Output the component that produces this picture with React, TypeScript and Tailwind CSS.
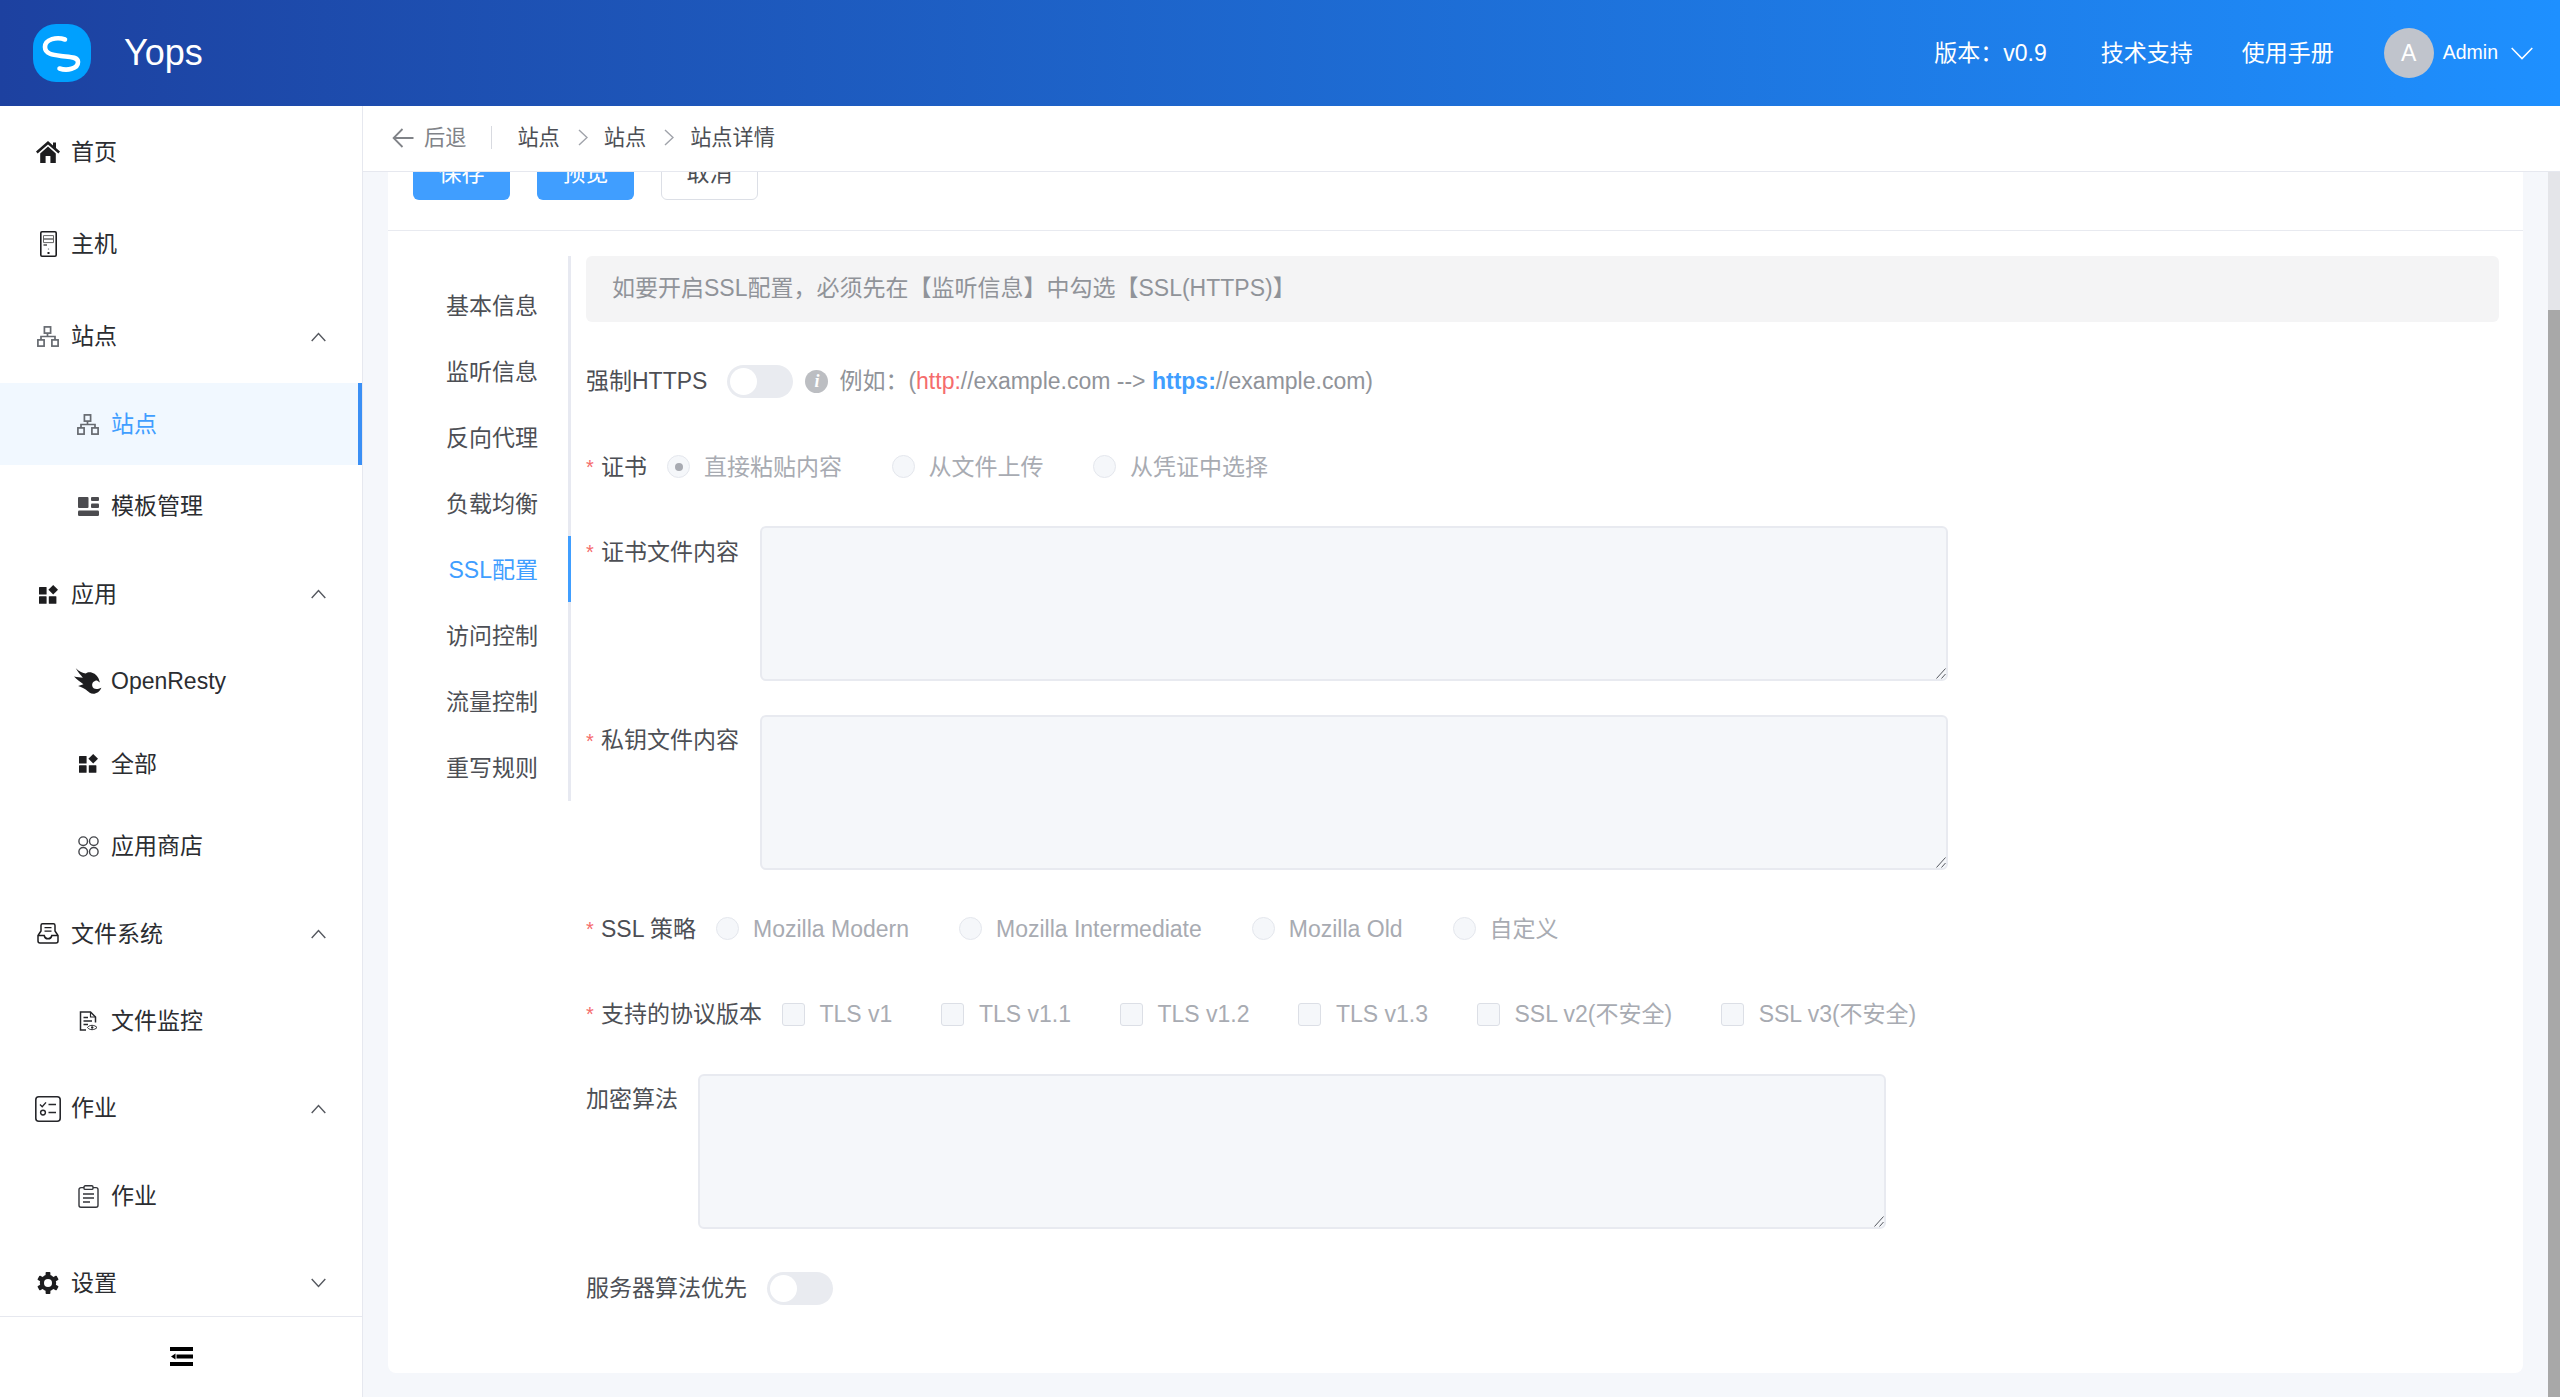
import React from "react";

const FONT = "font-['Liberation_Sans','Noto_Sans_CJK_SC',sans-serif]";

const Chevron = ({ up = true }: { up?: boolean }) => (
  <svg width="15" height="10" viewBox="0 0 15 10" fill="none" stroke="#55585f" strokeWidth="1.4">
    <path d={up ? "M0.7 9L7.5 1.6L14.3 9" : "M0.7 1L7.5 8.4L14.3 1"} />
  </svg>
);

const HomeIcon = () => (
  <svg width="24" height="22" viewBox="0 0 24 22" fill="#1d1d1f">
    <path d="M12 0L0 10.6L1.6 12.6L12 3.4L22.4 12.6L24 10.6L20 7V1.4H17V4.4Z" />
    <path d="M4.2 12.6L12 5.6L19.8 12.6V22H14.4V15H9.6V22H4.2Z" />
  </svg>
);
const ServerIcon = () => (
  <svg width="17" height="26" viewBox="0 0 17 26" fill="none" stroke="#1d1d1f">
    <rect x="0.8" y="0.8" width="15.4" height="24.4" rx="1.2" strokeWidth="1.6" />
    <path d="M3.5 4.6H13.5V8H3.5ZM3.5 8H13.5V11.6H3.5Z" strokeWidth="1" stroke="#666" />
    <path d="M3.5 14H7" strokeWidth="1.6" stroke="#555" />
    <path d="M8.5 17.5V18.6" strokeWidth="1.2" stroke="#777" />
    <path d="M8.5 21V23" strokeWidth="2" />
  </svg>
);
const SiteIcon = () => (
  <svg width="22" height="21" viewBox="0 0 22 21" fill="none" stroke="#666a70" strokeWidth="1.7">
    <rect x="7.4" y="0.9" width="6.2" height="6.2" />
    <rect x="0.9" y="13.9" width="6.2" height="6.2" />
    <rect x="14.9" y="13.9" width="6.2" height="6.2" />
    <path d="M10.5 7V10.5M4 14V10.5H18V14" />
  </svg>
);
const TemplateIcon = () => (
  <svg width="21" height="19" viewBox="0 0 21 19" fill="#4b4b4f">
    <rect x="0" y="0" width="10.5" height="11" rx="1" />
    <rect x="13" y="0" width="8" height="4" rx="1" />
    <rect x="13" y="6.5" width="8" height="4.5" rx="1" />
    <rect x="0" y="13.5" width="21" height="5.5" rx="1.2" />
  </svg>
);
const AppIcon = () => (
  <svg width="19" height="19" viewBox="0 0 19 19" fill="#1d1d1f">
    <rect x="0" y="2" width="7.6" height="7.6" rx="0.6" />
    <rect x="0" y="11.2" width="7.6" height="7.6" rx="0.6" />
    <rect x="9.8" y="11.2" width="7.6" height="7.6" rx="0.6" />
    <path d="M14.2 0L19 4.8L14.2 9.6L9.4 4.8Z" />
  </svg>
);
const BirdIcon = () => (
  <svg width="30" height="29" viewBox="20 24 95 90" fill="#1d1d1f">
    <path d="M26 24C38 36 50 40 60 42C70 32 94 38 103 58L108 72L98 66C88 66 80 74 82 84C84 94 96 98 113 90C106 108 86 116 72 106C62 98 54 90 34 84L52 78C42 70 30 64 20 52C32 54 42 56 50 56C42 46 34 38 26 24Z" />
  </svg>
);
const StoreIcon = () => (
  <svg width="21" height="21" viewBox="0 0 21 21" fill="none" stroke="#44464b" strokeWidth="1.4">
    <circle cx="5.2" cy="5.2" r="4.3" />
    <circle cx="15.8" cy="5.2" r="4.3" />
    <circle cx="5.2" cy="15.8" r="4.3" />
    <circle cx="15.8" cy="15.8" r="4.3" />
  </svg>
);
const InboxIcon = () => (
  <svg width="22" height="21" viewBox="0 0 22 21" fill="none" stroke="#1d1d1f" strokeWidth="1.5">
    <path d="M1 12.5L4 8V2.4A1.6 1.6 0 0 1 5.6 0.8H16.4A1.6 1.6 0 0 1 18 2.4V8L21 12.5V18A2 2 0 0 1 19 20H3A2 2 0 0 1 1 18Z" />
    <path d="M1 12.5H7.2C7.6 14.6 9 15.8 11 15.8C13 15.8 14.4 14.6 14.8 12.5H21" />
    <path d="M7.5 4.6H14.5M7.5 8.2H14.5" strokeWidth="1.3" />
  </svg>
);
const FileEyeIcon = () => (
  <svg width="19" height="20" viewBox="0 0 19 20" fill="none" stroke="#26272b" strokeWidth="1.5">
    <path d="M7 19H1.5V1H11.5L16.5 6V11.5" />
    <path d="M11.5 1V6H16.5" strokeWidth="1.2" />
    <path d="M4.5 6.5H9M4.5 10H13M4.5 13.5H9" strokeWidth="1.3" />
    <path d="M8.5 16.5C10.5 13.6 15.5 13.6 18 16.5C15.5 19.4 10.5 19.4 8.5 16.5Z" strokeWidth="1" />
    <circle cx="13.2" cy="16.5" r="1.2" fill="#26272b" stroke="none" />
  </svg>
);
const JobIcon = () => (
  <svg width="26" height="26" viewBox="0 0 26 26" fill="none" stroke="#26272b" strokeWidth="1.6">
    <rect x="0.8" y="0.8" width="24.4" height="24.4" rx="3" />
    <path d="M5 8.6L7.2 10.8L11 6.4" strokeWidth="1.4" />
    <path d="M13.5 8.6H21M13.5 16.5H21" strokeWidth="1.5" />
    <circle cx="8" cy="16.6" r="2.4" strokeWidth="1.4" />
  </svg>
);
const ClipIcon = () => (
  <svg width="21" height="23" viewBox="0 0 21 23" fill="none" stroke="#33353a" strokeWidth="1.4">
    <path d="M6 2.6H3A2 2 0 0 0 1 4.6V20.3A2 2 0 0 0 3 22.3H18A2 2 0 0 0 20 20.3V4.6A2 2 0 0 0 18 2.6H15" />
    <rect x="6" y="0.8" width="9" height="3.6" rx="1.2" />
    <path d="M5 9H16M5 13H16M5 17H12" strokeWidth="1.3" />
  </svg>
);
const GearIcon = () => (
  <svg width="22" height="22" viewBox="0 0 22 22">
    <g fill="#1d1d1f">
      <circle cx="11" cy="11" r="8.2" />
      <rect x="8.6" y="0" width="4.8" height="22" rx="0.8" />
      <rect x="8.6" y="0" width="4.8" height="22" rx="0.8" transform="rotate(60 11 11)" />
      <rect x="8.6" y="0" width="4.8" height="22" rx="0.8" transform="rotate(120 11 11)" />
    </g>
    <circle cx="11" cy="11" r="4" fill="#fff" />
  </svg>
);
const CollapseIcon = () => (
  <svg width="23" height="19" viewBox="0 0 23 19" fill="#000">
    <rect x="0" y="0" width="23" height="4" />
    <rect x="6.5" y="7.5" width="16.5" height="4" />
    <rect x="0" y="15" width="23" height="4" />
    <path d="M1 9.5L5.5 6.5V12.5Z" />
  </svg>
);

type Item = { label: string; icon: React.ReactNode; sub?: boolean; chevron?: "up" | "down"; active?: boolean };

const items: Item[] = [
  { label: "首页", icon: <HomeIcon /> },
  { label: "主机", icon: <ServerIcon /> },
  { label: "站点", icon: <SiteIcon />, chevron: "up" },
  { label: "站点", icon: <SiteIcon />, sub: true, active: true },
  { label: "模板管理", icon: <TemplateIcon />, sub: true },
  { label: "应用", icon: <AppIcon />, chevron: "up" },
  { label: "OpenResty", icon: <BirdIcon />, sub: true },
  { label: "全部", icon: <AppIcon />, sub: true },
  { label: "应用商店", icon: <StoreIcon />, sub: true },
  { label: "文件系统", icon: <InboxIcon />, chevron: "up" },
  { label: "文件监控", icon: <FileEyeIcon />, sub: true },
  { label: "作业", icon: <JobIcon />, chevron: "up" },
  { label: "作业", icon: <ClipIcon />, sub: true },
  { label: "设置", icon: <GearIcon />, chevron: "down" },
];

const NavItem = ({ item }: { item: Item }) => (
  <div
    className={`flex shrink-0 items-center ${item.sub ? "h-[82.5px] pl-[74px]" : "h-[92.3px] pl-[34px]"} ${
      item.active ? "border-r-4 border-[#3a8ff5] bg-[#f1f8ff] text-[#409eff]" : "text-[#2b2d31]"
    }`}
  >
    <span className="mr-[9px] flex w-[28px] items-center justify-center">{item.icon}</span>
    <span className="text-[23px]">{item.label}</span>
    {item.chevron && (
      <span className="ml-auto mr-[36px] flex">
        <Chevron up={item.chevron === "up"} />
      </span>
    )}
  </div>
);

const Sidebar = () => (
  <aside className="flex w-[363px] shrink-0 flex-col border-r border-[#e6e8ef] bg-white">
    <nav className="flex min-h-0 flex-1 flex-col overflow-hidden">
      {items.map((item, i) => (
        <NavItem key={i} item={item} />
      ))}
    </nav>
    <div className="flex h-[81px] shrink-0 items-center justify-center border-t border-[#e6e8ef] pb-[2px]">
      <CollapseIcon />
    </div>
  </aside>
);

const Header = () => (
  <header className="flex h-[106px] shrink-0 items-center bg-[linear-gradient(90deg,#1d41a0,#1e90ff)] pl-[33px] pr-[27px] text-white">
    <svg width="58" height="58" viewBox="0 0 58 58" fill="none">
      <rect width="58" height="58" rx="23" fill="#00a0fe" />
      <path
        d="M32 15.5C24 12.5 12 15 12 23C12 30 20 31 28 32C36 33 45 32.5 45 38C45 45 34 47 26.5 44.5"
        stroke="#fff"
        strokeWidth="4.6"
        strokeLinecap="round"
      />
    </svg>
    <span className="ml-[33px] text-[36px]">Yops</span>
    <div className="ml-auto flex items-center text-[23px]">
      <span>版本：v0.9</span>
      <span className="ml-[54px]">技术支持</span>
      <span className="ml-[49px]">使用手册</span>
      <span className="ml-[50px] flex h-[50px] w-[50px] items-center justify-center rounded-full bg-[#c0c4cc]">A</span>
      <span className="ml-[9px] text-[19.5px]">Admin</span>
      <svg className="ml-[13px]" width="22" height="13" viewBox="0 0 22 13" fill="none" stroke="#fff" strokeWidth="1.5">
        <path d="M0.7 1L11 11.6L21.3 1" />
      </svg>
    </div>
  </header>
);

const SmallChevron = () => (
  <svg width="10" height="17" viewBox="0 0 10 17" fill="none" stroke="#a0a3aa" strokeWidth="1.4">
    <path d="M1 1L9 8.5L1 16" />
  </svg>
);

const Breadcrumb = () => (
  <div className="flex h-[66px] shrink-0 items-center border-b border-[#e6e8ef] bg-white pb-[2px] pl-[29px] text-[21.2px] text-[#4d4f55]">
    <svg width="22" height="20" viewBox="0 0 22 20" fill="none" stroke="#808388" strokeWidth="1.8">
      <path d="M21.5 10H2M10.5 1L1.6 10L10.5 19" />
    </svg>
    <span className="ml-[10px] text-[#808388]">后退</span>
    <span className="mx-[25px] h-[23px] w-px bg-[#d8dae0]" />
    <span>站点</span>
    <span className="ml-[18px] mr-[16px] flex">
      <SmallChevron />
    </span>
    <span>站点</span>
    <span className="ml-[18px] mr-[16px] flex">
      <SmallChevron />
    </span>
    <span>站点详情</span>
  </div>
);

const tabs = ["基本信息", "监听信息", "反向代理", "负载均衡", "SSL配置", "访问控制", "流量控制", "重写规则"];

const Tabs = () => (
  <div className="flex h-[545px] w-[183px] shrink-0 flex-col border-r-[3px] border-[#e7e9f1] pt-[16px]">
    {tabs.map((t) => (
      <div
        key={t}
        className={`-mr-[3px] flex h-[66px] shrink-0 items-center justify-end pt-[3px] text-[23px] ${
          t === "SSL配置" ? "border-r-[3px] border-[#409eff] pr-[30px] text-[#409eff]" : "pr-[33px] text-[#4d4f55]"
        }`}
      >
        {t}
      </div>
    ))}
  </div>
);

const Label = ({ text, required = false }: { text: string; required?: boolean }) => (
  <span className="mr-[20px] flex h-[52px] shrink-0 items-center text-[23px] text-[#4d4f55]">
    {required && <span className="w-[15px] text-[20px] text-[#f56c6c]">*</span>}
    {text}
  </span>
);

const Toggle = () => (
  <span className="flex h-[33px] w-[66px] shrink-0 items-center rounded-full bg-[#e9ebf0] pl-[3px]">
    <span className="h-[27px] w-[27px] rounded-full bg-white" />
  </span>
);

const Radio = ({ text, checked = false }: { text: string; checked?: boolean }) => (
  <span className="flex items-center">
    <span className="flex h-[23px] w-[23px] items-center justify-center rounded-full border border-[#e4e7ed] bg-[#f5f7fa]">
      {checked && <span className="h-[8px] w-[8px] rounded-full bg-[#a8abb2]" />}
    </span>
    <span className="ml-[14px] text-[23px] text-[#a8abb2]">{text}</span>
  </span>
);

const Check = ({ text }: { text: string }) => (
  <span className="flex items-center">
    <span className="h-[23px] w-[23px] rounded-[3px] border border-[#dcdfe6] bg-[#f5f7fa]" />
    <span className="ml-[14.5px] text-[23px] text-[#a8abb2]">{text}</span>
  </span>
);

const Area = ({ className }: { className: string }) => (
  <span className={`relative block h-[155px] w-[1188px] ${className}`}>
    <textarea
      readOnly
      className="block h-full w-full resize-none rounded-[6px] border-2 border-[#e8eaf0] bg-[#f5f7fa] outline-none"
    />
    <svg className="absolute bottom-[2px] right-[2px]" width="10" height="11" viewBox="0 0 10 11" fill="none" stroke="#55585f" strokeWidth="1">
      <path d="M0.5 10.5L9.5 0.5M5.5 10.5L9.5 6" />
    </svg>
  </span>
);

const Form = () => (
  <div className="flex min-w-0 flex-1 flex-col gap-[33.4px] pl-[15px] pr-[24px]">
    <div className="flex h-[66px] shrink-0 items-center rounded-[6px] bg-[#f4f4f5] pb-[2px] pl-[26px] text-[23px] text-[#909399]">
      如要开启SSL配置，必须先在【监听信息】中勾选【SSL(HTTPS)】
    </div>
    <div className="flex h-[52px] shrink-0 items-center">
      <Label text="强制HTTPS" />
      <Toggle />
      <span className="ml-[12px] flex h-[23px] w-[23px] items-center justify-center rounded-full bg-[#bcbec2] font-['Liberation_Serif',serif] text-[18px] font-bold italic text-white">
        i
      </span>
      <span className="ml-[11px] text-[23px] text-[#909399]">
        例如：(<span className="text-[#f56c6c]">http:</span>//example.com --&gt;{" "}
        <span className="font-bold text-[#409eff]">https:</span>//example.com)
      </span>
    </div>
    <div className="flex h-[52px] shrink-0 items-center">
      <Label text="证书" required />
      <div className="flex gap-[49.5px]">
        <Radio text="直接粘贴内容" checked />
        <Radio text="从文件上传" />
        <Radio text="从凭证中选择" />
      </div>
    </div>
    <div className="flex shrink-0 items-start">
      <Label text="证书文件内容" required />
      <Area className="ml-[1px]" />
    </div>
    <div className="flex shrink-0 items-start">
      <Label text="私钥文件内容" required />
      <Area className="ml-[1px]" />
    </div>
    <div className="flex h-[52px] shrink-0 items-center">
      <Label text="SSL 策略" required />
      <div className="flex gap-[50px]">
        <Radio text="Mozilla Modern" />
        <Radio text="Mozilla Intermediate" />
        <Radio text="Mozilla Old" />
        <Radio text="自定义" />
      </div>
    </div>
    <div className="flex h-[52px] shrink-0 items-center">
      <Label text="支持的协议版本" required />
      <div className="flex gap-[49px]">
        {["TLS v1", "TLS v1.1", "TLS v1.2", "TLS v1.3", "SSL v2(不安全)", "SSL v3(不安全)"].map((t) => (
          <Check key={t} text={t} />
        ))}
      </div>
    </div>
    <div className="flex shrink-0 items-start">
      <Label text="加密算法" />
      <Area className="" />
    </div>
    <div className="flex h-[52px] shrink-0 items-center">
      <Label text="服务器算法优先" />
      <Toggle />
    </div>
  </div>
);

const Card = () => (
  <div className="-mt-[26px] flex h-[1227px] flex-col rounded-[8px] bg-white">
    <div className="flex shrink-0 gap-[27px] border-b border-[#e8eaf0] pb-[30px] pl-[25px] text-[23px]">
      <span className="flex h-[54px] w-[97px] items-center justify-center rounded-[6px] bg-[#409eff] pt-[1px] text-white">保存</span>
      <span className="flex h-[54px] w-[97px] items-center justify-center rounded-[6px] bg-[#409eff] pt-[1px] text-white">预览</span>
      <span className="flex h-[54px] w-[97px] items-center justify-center rounded-[6px] border border-[#dcdfe6] pt-[1px] text-[#4d4f55]">取消</span>
    </div>
    <div className="flex min-h-0 flex-1 pt-[25px]">
      <Tabs />
      <Form />
    </div>
  </div>
);

export default function App() {
  return (
    <div className={`flex h-screen w-full flex-col overflow-hidden bg-[#f5f7fb] ${FONT}`}>
      <Header />
      <div className="flex min-h-0 flex-1">
        <Sidebar />
        <main className="flex min-w-0 flex-1 flex-col">
          <Breadcrumb />
          <div className="flex min-h-0 flex-1">
            <div className="min-w-0 flex-1 overflow-hidden pl-[25px] pr-[25px]">
              <Card />
            </div>
            <div className="flex w-[12px] shrink-0 flex-col bg-[#e4e5e9]">
              <div className="h-[138px] shrink-0" />
              <div className="flex-1 bg-[#a8a8a8]" />
            </div>
          </div>
        </main>
      </div>
    </div>
  );
}
